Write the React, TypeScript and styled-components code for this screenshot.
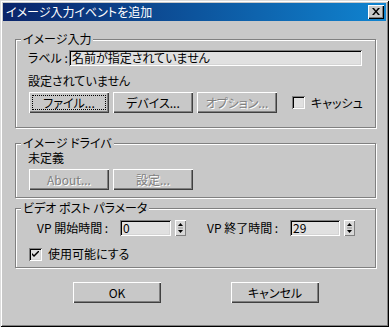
import React from 'react';
import styled, { createGlobalStyle } from 'styled-components';

const FONT = `"Noto Sans CJK JP", "Liberation Sans", sans-serif`;

const Global = createGlobalStyle`
  html, body { margin: 0; padding: 0; background: #c8c8c8; }
  body { font-family: ${FONT}; font-size: 12px; }
  * { box-sizing: border-box; }
`;

const Window = styled.div`
  width: 389px;
  height: 327px;
  padding: 3px;
  background: #c8c8c8;
  box-shadow: inset 1px 1px 0 #dcdcdc, inset -1px -1px 0 #000,
    inset 2px 2px 0 #fff, inset -2px -2px 0 #808080;
  display: flex;
  flex-direction: column;
  font-family: ${FONT};
  font-feature-settings: "palt";
  font-size: 12px;
  line-height: 14px;
  color: #000;
`;

const TitleBar = styled.div`
  height: 18px;
  flex: none;
  background: linear-gradient(to right, #0a246a, #1084d0);
  display: flex;
  align-items: center;
  justify-content: space-between;
  padding: 0 2px 0 3px;
  color: #fff;
`;

const TitleText = styled.span`
  white-space: nowrap;
`;

const CloseButton = styled.div`
  width: 16px;
  height: 14px;
  background: #c8c8c8;
  box-shadow: inset 1px 1px 0 #fff, inset -1px -1px 0 #000, inset -2px -2px 0 #808080;
  display: flex;
  align-items: center;
  justify-content: center;
  padding-bottom: 1px;
`;

const Content = styled.div`
  padding: 11px 10px 0 12px;
  display: flex;
  flex-direction: column;
`;

const Group = styled.fieldset<{ $top?: number }>`
  margin: ${(p) => p.$top ?? 0}px 0 0 0;
  padding: 0;
  min-width: 0;
  border: 1px solid #808080;
  box-shadow: 1px 1px 0 #fff, inset 1px 1px 0 #fff;
`;

const Legend = styled.legend`
  margin-left: 5px;
  padding: 0 2px;
  line-height: 14px;
  height: 14px;
  background: #c8c8c8;
  white-space: nowrap;
`;

const GroupBody = styled.div<{ $pt: number; $pb: number }>`
  padding: ${(p) => p.$pt}px 13px ${(p) => p.$pb}px 13px;
  display: flex;
  flex-direction: column;
`;

const Row = styled.div<{ $mt?: number; $ml?: number; $h?: number }>`
  display: flex;
  align-items: center;
  margin-top: ${(p) => p.$mt ?? 0}px;
  margin-left: ${(p) => p.$ml ?? 0}px;
  height: ${(p) => p.$h ?? 14}px;
  white-space: nowrap;
`;

const FieldLabel = styled.span<{ $w: number }>`
  width: ${(p) => p.$w}px;
  flex: none;
  margin-left: -1px;
  white-space: nowrap;
`;

const TextField = styled.div<{ $w?: number }>`
  ${(p) => (p.$w ? `width: ${p.$w}px; flex: none;` : 'flex: 1;')}
  height: 16px;
  background: #e0e0e0;
  box-shadow: inset 1px 1px 0 #808080, inset -1px -1px 0 #fff,
    inset 2px 2px 0 #000, inset -2px -2px 0 #d4d4d4;
  padding: 1px 2px 0 3px;
  line-height: 14px;
  white-space: nowrap;
  overflow: hidden;
`;

const Button = styled.div<{ $w?: number; $disabled?: boolean; $focus?: boolean }>`
  width: ${(p) => p.$w ?? 80}px;
  height: 21px;
  flex: none;
  display: flex;
  align-items: center;
  justify-content: center;
  background: #c8c8c8;
  box-shadow: inset 1px 1px 0 #fff, inset -1px -1px 0 #404040, inset -2px -2px 0 #808080;
  color: ${(p) => (p.$disabled ? '#808080' : '#000')};
  text-shadow: ${(p) => (p.$disabled ? '1px 1px 0 #fff' : 'none')};
  outline: ${(p) => (p.$focus ? '1px dotted #000' : 'none')};
  outline-offset: -4px;
  white-space: nowrap;
`;

const ButtonRow = styled.div<{ $mt: number; $gap: number; $pl?: number }>`
  display: flex;
  gap: ${(p) => p.$gap}px;
  margin-top: ${(p) => p.$mt}px;
  padding-left: ${(p) => p.$pl ?? 0}px;
  align-items: center;
  height: 21px;
  white-space: nowrap;
`;

const CheckBox = styled.div<{ $ml?: number }>`
  width: 13px;
  height: 13px;
  flex: none;
  margin-left: ${(p) => p.$ml ?? 0}px;
  background: #e0e0e0;
  box-shadow: inset 1px 1px 0 #808080, inset -1px -1px 0 #fff,
    inset 2px 2px 0 #000, inset -2px -2px 0 #d4d4d4;
  display: flex;
  align-items: center;
  justify-content: center;
`;

const CheckLabel = styled.span<{ $ml: number }>`
  margin-left: ${(p) => p.$ml}px;
  flex: none;
  white-space: nowrap;
`;

const SpinBlock = styled.div<{ $ml?: number }>`
  display: flex;
  align-items: center;
  margin-left: ${(p) => p.$ml ?? 0}px;
`;

const Spinner = styled.div`
  width: 11px;
  height: 16px;
  margin-left: 4px;
  flex: none;
  background: #d8d8d8;
  box-shadow: inset 1px 1px 0 #fff, inset -1px -1px 0 #808080;
  display: flex;
  align-items: center;
  justify-content: center;
`;

const OuterCheck = () => (
  <svg width="7" height="7" viewBox="0 0 7 7">
    <path d="M0 2 L0 4 L2 6 L7 1 L7 -1 L2 4 Z" fill="#000" />
  </svg>
);

const SpinArrows = () => (
  <svg width="5" height="10" viewBox="0 0 5 10">
    <path d="M2.5 0 L5 3 L0 3 Z" fill="#000" />
    <rect x="0" y="4.5" width="5" height="1" fill="#909090" />
    <path d="M0 7 L5 7 L2.5 10 Z" fill="#000" />
  </svg>
);

const CloseX = () => (
  <svg width="8" height="7" viewBox="0 0 8 7">
    <path d="M0 0 H2 L4 2.5 L6 0 H8 L5 3.5 L8 7 H6 L4 4.5 L2 7 H0 L3 3.5 Z" fill="#000" />
  </svg>
);

export default function App() {
  return (
    <>
      <Global />
      <Window>
        <TitleBar>
          <TitleText>イメージ入力イベントを追加</TitleText>
          <CloseButton>
            <CloseX />
          </CloseButton>
        </TitleBar>
        <Content>
          <Group>
            <Legend>イメージ入力</Legend>
            <GroupBody $pt={4} $pb={14}>
              <Row $h={16}>
                <FieldLabel $w={41}>ラベル :</FieldLabel>
                <TextField>名前が指定されていません</TextField>
              </Row>
              <Row $mt={8}>
                <FieldLabel $w={120}>設定されていません</FieldLabel>
              </Row>
              <ButtonRow $mt={4} $gap={4}>
                <Button $focus>ファイル...</Button>
                <Button>デバイス...</Button>
                <Button $disabled>オプション...</Button>
                <CheckBox $ml={11} />
                <CheckLabel $ml={2}>キャッシュ</CheckLabel>
              </ButtonRow>
            </GroupBody>
          </Group>

          <Group $top={8}>
            <Legend>イメージ ドライバ</Legend>
            <GroupBody $pt={1} $pb={7}>
              <Row>
                <FieldLabel $w={60}>未定義</FieldLabel>
              </Row>
              <ButtonRow $mt={4} $gap={4}>
                <Button $disabled>About...</Button>
                <Button $disabled>設定...</Button>
              </ButtonRow>
            </GroupBody>
          </Group>

          <Group $top={3}>
            <Legend>ビデオ ポスト パラメータ</Legend>
            <GroupBody $pt={5} $pb={6}>
              <Row $h={16} $ml={9}>
                <SpinBlock>
                  <FieldLabel $w={83}>VP 開始時間 :</FieldLabel>
                  <TextField $w={51}>0</TextField>
                  <Spinner>
                    <SpinArrows />
                  </Spinner>
                </SpinBlock>
                <SpinBlock $ml={22}>
                  <FieldLabel $w={83}>VP 終了時間 :</FieldLabel>
                  <TextField $w={50}>29</TextField>
                  <Spinner>
                    <SpinArrows />
                  </Spinner>
                </SpinBlock>
              </Row>
              <Row $mt={11}>
                <CheckBox>
                  <OuterCheck />
                </CheckBox>
                <CheckLabel $ml={6}>使用可能にする</CheckLabel>
              </Row>
            </GroupBody>
          </Group>

          <ButtonRow $mt={14} $gap={70} $pl={58}>
            <Button $w={88}>OK</Button>
            <Button $w={88}>キャンセル</Button>
          </ButtonRow>
        </Content>
      </Window>
    </>
  );
}
